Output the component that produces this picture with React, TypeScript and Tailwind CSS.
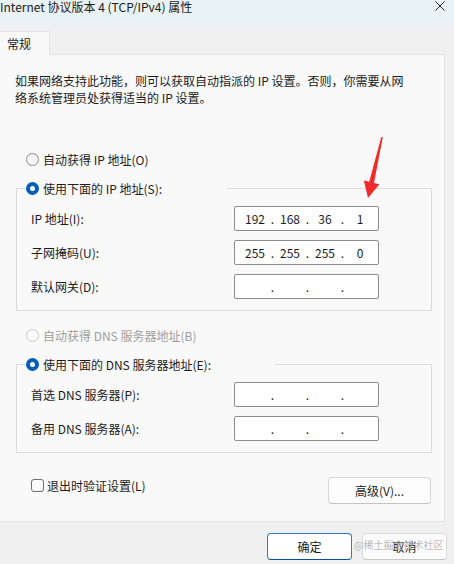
import React from "react";

const ipRows = [
  { label: "IP 地址(I):", parts: ["192", "168", "36", "1"] },
  { label: "子网掩码(U):", parts: ["255", "255", "255", "0"] },
  { label: "默认网关(D):", parts: ["", "", "", ""] },
];

const dnsRows = [
  { label: "首选 DNS 服务器(P):", parts: ["", "", "", ""] },
  { label: "备用 DNS 服务器(A):", parts: ["", "", "", ""] },
];

const Radio = ({ checked, disabled }: { checked?: boolean; disabled?: boolean }) => {
  if (checked) {
    return (
      <span className="flex h-[13px] w-[13px] shrink-0 items-center justify-center rounded-full bg-[#005fb8]">
        <span className="h-[5px] w-[5px] rounded-full bg-white" />
      </span>
    );
  }
  return (
    <span
      className={
        disabled
          ? "h-[13px] w-[13px] shrink-0 rounded-full border border-[#c9c9c9] bg-[#fbfbfb]"
          : "h-[13px] w-[13px] shrink-0 rounded-full border border-[#858585] bg-[#f6f6f6]"
      }
    />
  );
};

const IpBox = ({ parts }: { parts: string[] }) => (
  <div className="flex h-[25px] w-[145px] items-center rounded-[2px] border border-[#8d8d8d] bg-white pl-[5px] text-[12px] text-[#1b1b1b]">
    {parts.map((p, i) => (
      <React.Fragment key={i}>
        {i > 0 && <span className="w-[5px] text-center">.</span>}
        <span className="w-[30px] text-center">{p}</span>
      </React.Fragment>
    ))}
  </div>
);

const Group = ({
  legend,
  legendWidth,
  rows,
}: {
  legend: string;
  legendWidth: string;
  rows: { label: string; parts: string[] }[];
}) => (
  <fieldset className="ml-[1px] mt-[12px] w-[416px] border border-[#dcdcdc]">
    <legend className={`ml-[8px] pl-[1px] ${legendWidth}`}>
      <div className="flex h-[17px] items-center gap-[4px]">
        <Radio checked />
        <span>{legend}</span>
      </div>
    </legend>
    <div className="flex flex-col gap-[9px] pb-[11px] pl-[14px] pt-[9px]">
      {rows.map((r) => (
        <div key={r.label} className="flex h-[25px] items-center">
          <span className="w-[203px]">{r.label}</span>
          <IpBox parts={r.parts} />
        </div>
      ))}
    </div>
  </fieldset>
);

export default function App() {
  return (
    <div className="relative flex h-[564px] w-[454px] flex-col overflow-hidden bg-[#f0f0f0] font-['Noto_Sans_CJK_SC',sans-serif] text-[12px] leading-[17px] text-[#1b1b1b]">
      {/* title bar */}
      <div className="flex h-[25px] items-start justify-between bg-[#e9f2f5] pr-[9px]">
        <span className="leading-[14px]">Internet 协议版本 4 (TCP/IPv4) 属性</span>
        <svg width="10" height="10" viewBox="0 0 10 10" className="mt-[1px]">
          <path d="M0.5 0.5L9.5 9.5M9.5 0.5L0.5 9.5" stroke="#222" strokeWidth="1" />
        </svg>
      </div>

      {/* tabs */}
      <div className="mt-[6px] flex h-[24px] w-[445px]">
        <div className="flex w-[50px] items-center border-r border-t border-[#e2e2e2] bg-[#f9f9f9] pl-[7px]">常规</div>
        <div className="flex-1 border-b border-[#e2e2e2]" />
      </div>

      {/* panel */}
      <div className="flex w-[445px] flex-col border-b border-r border-[#e2e2e2] bg-[#f9f9f9] pb-[17px] pl-[15px] pt-[17px]">
        <p>
          如果网络支持此功能，则可以获取自动指派的 IP 设置。否则，你需要从网
          <br />
          络系统管理员处获得适当的 IP 设置。
        </p>

        <div className="ml-[11px] mt-[45px] flex h-[17px] items-center gap-[4px]">
          <Radio />
          <span>自动获得 IP 地址(O)</span>
        </div>
        <Group legend="使用下面的 IP 地址(S):" legendWidth="w-[202px]" rows={ipRows} />

        <div className="ml-[11px] mt-[16px] flex h-[17px] items-center gap-[4px] text-[#9e9e9e]">
          <Radio disabled />
          <span>自动获得 DNS 服务器地址(B)</span>
        </div>
        <Group legend="使用下面的 DNS 服务器地址(E):" legendWidth="w-[250px]" rows={dnsRows} />

        <div className="mt-[24px] flex w-[416px] items-start justify-between">
          <div className="ml-[16px] flex h-[17px] items-center gap-[3px]">
            <span className="h-[13px] w-[13px] rounded-[3px] border border-[#6e6e6e] bg-[#fbfbfb]" />
            <span>退出时验证设置(L)</span>
          </div>
          <button className="h-[27px] w-[103px] rounded-[4px] border border-[#d6d6d6] border-b-[#c4c4c4] bg-[#fdfdfd]">
            高级(V)...
          </button>
        </div>
      </div>

      {/* footer */}
      <div className="flex justify-end gap-[10px] pr-[7px] pt-[11px]">
        <button className="h-[27px] w-[85px] rounded-[4px] border border-[#2a7bd0] border-b-[#0a4f9e] bg-white">
          确定
        </button>
        <button className="h-[27px] w-[85px] rounded-[4px] border border-[#d9d9d9] border-b-[#c6c6c6] bg-[#fbfbfb]">
          取消
        </button>
      </div>

      {/* watermark */}
      <span className="pointer-events-none absolute left-[354px] top-[538px] text-[10px] leading-[14px] text-[#b4b4b4] opacity-90">
        @稀土掘金技术社区
      </span>

      {/* red annotation arrow */}
      <svg className="pointer-events-none absolute left-0 top-0" width="454" height="564" viewBox="0 0 454 564">
        <polygon
          points="381.3,137 382.8,137.3 374,182.9 379.4,184.2 368,198 363.8,180.6 369.2,181.8"
          fill="#f02b2b"
        />
      </svg>
    </div>
  );
}
